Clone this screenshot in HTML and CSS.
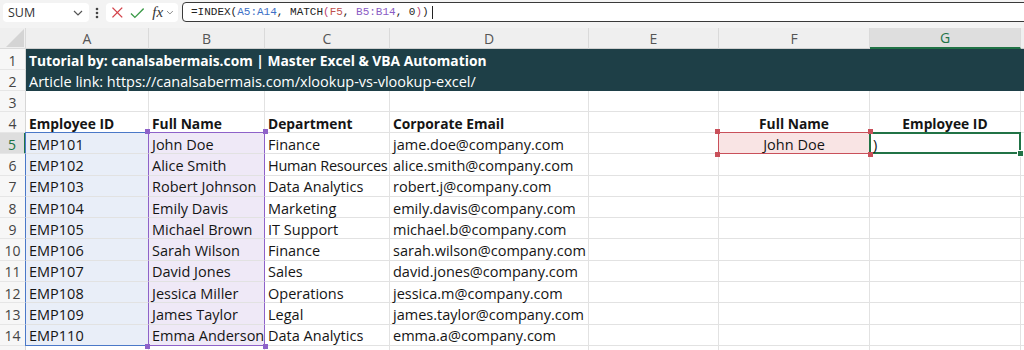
FILE: index.html
```html
<!DOCTYPE html>
<html lang="en">
<head>
    <meta charset="UTF-8">
    <title>INDEX MATCH - Excel</title>
    <link rel="stylesheet" href="styles.css">
</head>
<body>
    <div class="toolbar">
        <div class="namebox">
            <span>SUM</span>
            <svg class="chev" width="10" height="6" viewBox="0 0 10 6"><path d="M1 1 L5 5 L9 1" fill="none" stroke="#555" stroke-width="1.2"/></svg>
        </div>
        <svg class="dots" width="4" height="12" viewBox="0 0 4 12"><circle cx="2" cy="2" r="1.3" fill="#444"/><circle cx="2" cy="6" r="1.3" fill="#444"/><circle cx="2" cy="10" r="1.3" fill="#444"/></svg>
        <div class="fnbox">
            <svg width="13" height="13" viewBox="0 0 13 13"><path d="M1.5 1.5 L11.5 11.5 M11.5 1.5 L1.5 11.5" stroke="#d4424a" stroke-width="1.4" fill="none"/></svg>
            <svg width="15" height="12" viewBox="0 0 15 12"><path d="M1 6.5 L5 10.5 L14 1.5" stroke="#3b9a48" stroke-width="1.4" fill="none"/></svg>
            <span class="fx">fx</span>
            <svg class="chev small" width="8" height="5" viewBox="0 0 8 5"><path d="M1 1 L4 4 L7 1" fill="none" stroke="#888" stroke-width="1"/></svg>
        </div>
        <div class="formula">
            <span>=INDEX(</span><span class="f-blue">A5:A14</span><span>, MATCH</span><span class="f-pink">(</span><span class="f-red">F5</span><span>, </span><span class="f-purple">B5:B14</span><span>, 0</span><span class="f-pink">)</span><span>)</span><span class="caret"></span>
        </div>
    </div>

    <div class="sheet">
        <!-- column headers -->
        <div class="corner"><svg width="18" height="18" viewBox="0 0 18 18"><polygon points="18,0 18,18 0,18" fill="#d4d4d4"/></svg></div>
        <div class="ch">A</div>
        <div class="ch">B</div>
        <div class="ch">C</div>
        <div class="ch">D</div>
        <div class="ch">E</div>
        <div class="ch">F</div>
        <div class="ch active">G</div>
        <div class="ch"></div>

        <!-- rows 1-2 banner -->
        <div class="rh">1</div>
        <div class="banner">
            <div class="banner-line bold">Tutorial by: canalsabermais.com | Master Excel &amp; VBA Automation</div>
            <div class="banner-line">Article link: https://canalsabermais.com/xlookup-vs-vlookup-excel/</div>
        </div>
        <div class="rh">2</div>

        <!-- row 3 -->
        <div class="rh">3</div>
        <div class="c"></div><div class="c"></div><div class="c"></div><div class="c"></div><div class="c"></div><div class="c"></div><div class="c"></div><div class="c"></div>

        <!-- row 4 -->
        <div class="rh">4</div>
        <div class="c bold">Employee ID</div>
        <div class="c bold">Full Name</div>
        <div class="c bold">Department</div>
        <div class="c bold">Corporate Email</div>
        <div class="c"></div>
        <div class="c bold center">Full Name</div>
        <div class="c bold center">Employee ID</div>
        <div class="c"></div>

        <!-- row 5 -->
        <div class="rh active">5</div>
        <div class="c ra top">EMP101</div>
        <div class="c rb top">John Doe<span class="handle tl"></span><span class="handle tr"></span></div>
        <div class="c">Finance</div>
        <div class="c">jame.doe@company.com</div>
        <div class="c"></div>
        <div class="c rf center">John Doe<span class="handle tl"></span><span class="handle tr"></span><span class="handle bl"></span><span class="handle br"></span></div>
        <div class="c sel">)<span class="handle fill"></span></div>
        <div class="c"></div>

        <!-- row 6 -->
        <div class="rh">6</div>
        <div class="c ra">EMP102</div>
        <div class="c rb">Alice Smith</div>
        <div class="c tight">Human Resources</div>
        <div class="c">alice.smith@company.com</div>
        <div class="c"></div><div class="c"></div><div class="c"></div><div class="c"></div>

        <!-- row 7 -->
        <div class="rh">7</div>
        <div class="c ra">EMP103</div>
        <div class="c rb">Robert Johnson</div>
        <div class="c">Data Analytics</div>
        <div class="c">robert.j@company.com</div>
        <div class="c"></div><div class="c"></div><div class="c"></div><div class="c"></div>

        <!-- row 8 -->
        <div class="rh">8</div>
        <div class="c ra">EMP104</div>
        <div class="c rb">Emily Davis</div>
        <div class="c">Marketing</div>
        <div class="c">emily.davis@company.com</div>
        <div class="c"></div><div class="c"></div><div class="c"></div><div class="c"></div>

        <!-- row 9 -->
        <div class="rh">9</div>
        <div class="c ra">EMP105</div>
        <div class="c rb">Michael Brown</div>
        <div class="c">IT Support</div>
        <div class="c">michael.b@company.com</div>
        <div class="c"></div><div class="c"></div><div class="c"></div><div class="c"></div>

        <!-- row 10 -->
        <div class="rh">10</div>
        <div class="c ra">EMP106</div>
        <div class="c rb">Sarah Wilson</div>
        <div class="c">Finance</div>
        <div class="c">sarah.wilson@company.com</div>
        <div class="c"></div><div class="c"></div><div class="c"></div><div class="c"></div>

        <!-- row 11 -->
        <div class="rh">11</div>
        <div class="c ra">EMP107</div>
        <div class="c rb">David Jones</div>
        <div class="c">Sales</div>
        <div class="c">david.jones@company.com</div>
        <div class="c"></div><div class="c"></div><div class="c"></div><div class="c"></div>

        <!-- row 12 -->
        <div class="rh">12</div>
        <div class="c ra">EMP108</div>
        <div class="c rb">Jessica Miller</div>
        <div class="c">Operations</div>
        <div class="c">jessica.m@company.com</div>
        <div class="c"></div><div class="c"></div><div class="c"></div><div class="c"></div>

        <!-- row 13 -->
        <div class="rh">13</div>
        <div class="c ra">EMP109</div>
        <div class="c rb">James Taylor</div>
        <div class="c">Legal</div>
        <div class="c">james.taylor@company.com</div>
        <div class="c"></div><div class="c"></div><div class="c"></div><div class="c"></div>

        <!-- row 14 -->
        <div class="rh">14</div>
        <div class="c ra bot">EMP110</div>
        <div class="c rb bot">Emma Anderson<span class="handle bl"></span><span class="handle br"></span></div>
        <div class="c">Data Analytics</div>
        <div class="c">emma.a@company.com</div>
        <div class="c"></div><div class="c"></div><div class="c"></div><div class="c"></div>

        <!-- row 15, only its top edge is in view -->
        <div class="rh"></div>
        <div class="c"></div><div class="c"></div><div class="c"></div><div class="c"></div><div class="c"></div><div class="c"></div><div class="c"></div><div class="c"></div>
    </div>
</body>
</html>
```

FILE: styles.css
```css
body {
    margin: 0;
    padding: 0;
    background-color: #ffffff;
    font-family: "Open Sans", "Noto Sans", sans-serif;
    overflow: hidden;
}

/* formula bar */
.toolbar {
    display: flex;
    align-items: flex-start;
    height: 28px;
    padding: 3px 0 0 3px;
    box-sizing: border-box;
    background-color: #f3f3f3;
}

.namebox {
    display: flex;
    align-items: center;
    justify-content: space-between;
    width: 86px;
    height: 19px;
    padding: 0 6px 0 5px;
    box-sizing: border-box;
    background-color: #ffffff;
    border-radius: 4px;
    font-size: 12.5px;
    color: #333;
}

.dots {
    margin: 4px 7px 0 6px;
}

.fnbox {
    display: flex;
    align-items: center;
    gap: 6px;
    width: 72px;
    height: 19px;
    padding: 0 4px 0 5px;
    box-sizing: border-box;
    background-color: #ffffff;
    border-radius: 4px;
}

.fx {
    font-family: "Liberation Serif", serif;
    font-style: italic;
    font-size: 15px;
    line-height: 19px;
    color: #333;
    margin-left: 2px;
}

.chev.small {
    margin-left: -3px;
}

.formula {
    flex: 1;
    display: flex;
    align-items: center;
    height: 20px;
    margin: -1px -6px 0 4px;
    padding-left: 8px;
    box-sizing: border-box;
    background-color: #ffffff;
    border: 1.5px solid #3a3a3a;
    border-radius: 4px;
    font-family: "Liberation Mono", monospace;
    font-size: 11px;
    color: #222;
    white-space: pre;
}

.f-blue { color: #3c6fc6; }
.f-red { color: #c0504d; }
.f-purple { color: #8a5cc4; }
.f-pink { color: #b8406e; }

.caret {
    width: 1px;
    height: 13px;
    margin-left: 3px;
    background-color: #222;
}

/* grid */
.sheet {
    display: grid;
    grid-template-columns: 26px 123px 116px 125px 199px 130px 151px 151px 1fr;
    grid-template-rows: 21px repeat(4, 21px) repeat(11, 21.3px);
    font-size: 14.5px;
    color: #151515;
}

.corner {
    display: flex;
    align-items: flex-end;
    justify-content: flex-end;
    padding: 0 1px 1px 0;
    background-color: #efefef;
    border-right: 1px solid #dadada;
    border-bottom: 1px solid #dadada;
}

.ch {
    display: flex;
    align-items: center;
    justify-content: center;
    background-color: #efefef;
    border-right: 1px solid #dadada;
    border-bottom: 1px solid #cfcfcf;
    font-size: 14px;
    color: #555;
}

.ch.active {
    background-color: #dedede;
    color: #217346;
    border-bottom: 2px solid #217346;
}

.rh {
    display: flex;
    align-items: center;
    justify-content: center;
    padding-top: 2px;
    box-sizing: border-box;
    background-color: #f7f7f7;
    border-right: 1px solid #d6d6d6;
    border-bottom: 1px solid #e6e6e6;
    font-size: 14px;
    color: #444;
}

.rh.active {
    background-color: #dedede;
    color: #217346;
    border-right: 2px solid #217346;
}

.c {
    position: relative;
    display: flex;
    align-items: center;
    padding: 2px 3px 0;
    white-space: nowrap;
    border-right: 1px solid #e2e2e2;
    border-bottom: 1px solid #e2e2e2;
    box-sizing: border-box;
}

.tight {
    letter-spacing: -0.25px;
}

.bold {
    font-weight: 700;
    font-size: 13.8px;
}

.center {
    justify-content: center;
}

/* referenced ranges: the cell steps 1px over the previous gridline */
.ra,
.rb {
    margin-left: -1px;
    padding-left: 3px;
}

.ra {
    background-color: #e9eef8;
    border-left: 1px solid #4a78c8;
    border-right-color: #4a78c8;
}

.ra.top { border-top: 1px solid #4a78c8; margin-top: -1px; }
.ra.bot { border-bottom-color: #4a78c8; }

.rb {
    background-color: #efe9f7;
    border-left: 1px solid #8e62c9;
    border-right-color: #8e62c9;
}

.rb.top { border-top: 1px solid #8e62c9; margin-top: -1px; }
.rb.bot { border-bottom-color: #8e62c9; }

.rf {
    margin: -1px 0 0 -1px;
    background-color: #f9e4e4;
    border: 1px solid #c9505a;
}

.sel {
    z-index: 1;
    margin: -1px 0 0 -1px;
    padding-left: 2px;
    border: 2px solid #217346;
}

.banner {
    grid-column: 2 / 10;
    grid-row: 2 / 4;
    display: grid;
    grid-template-rows: 21px 21px;
    background-color: #1e3f47;
    color: #ffffff;
}

.banner-line {
    display: flex;
    align-items: center;
    padding: 2px 0 0 3px;
    white-space: nowrap;
}

.handle {
    position: absolute;
    z-index: 2;
    width: 5px;
    height: 5px;
}

.rb .handle { background-color: #8e62c9; }
.rf .handle { background-color: #c9505a; }

.tl { left: -4px; top: -4px; }
.tr { right: -4px; top: -4px; }
.bl { left: -4px; bottom: -4px; }
.br { right: -4px; bottom: -4px; }

.handle.fill {
    width: 5px;
    height: 5px;
    right: -5px;
    bottom: -5px;
    background-color: #217346;
    border: 1px solid #ffffff;
}
```
